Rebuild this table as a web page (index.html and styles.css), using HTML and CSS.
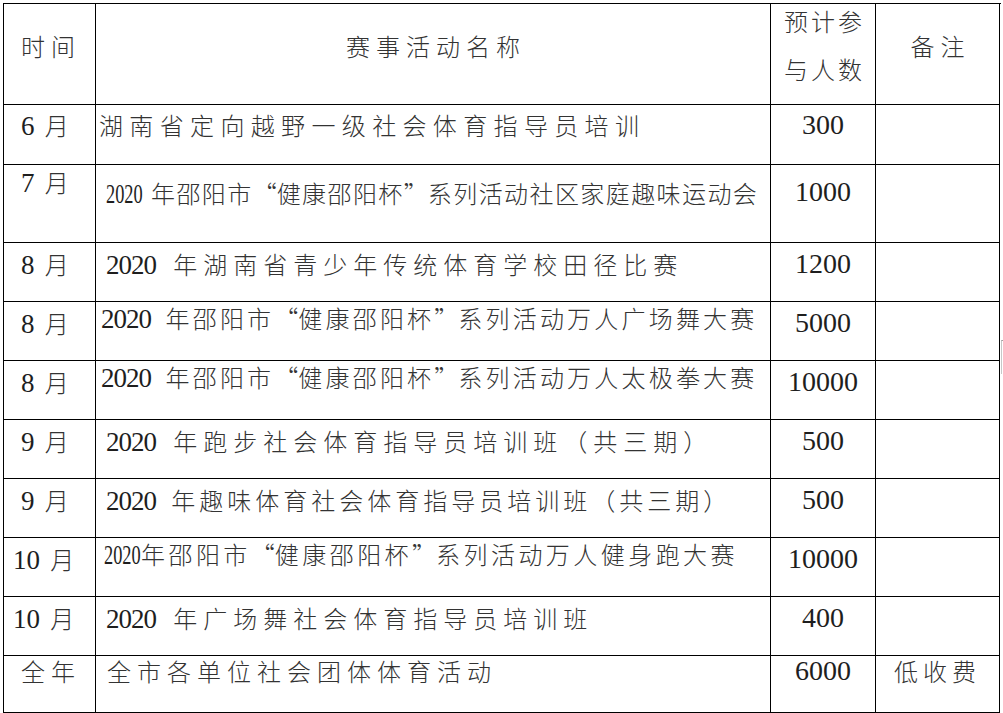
FILE: index.html
```html
<!DOCTYPE html>
<html lang="zh-CN">
<head>
<meta charset="utf-8">
<title>赛事活动</title>
<link rel="stylesheet" href="styles.css">
</head>
<body>
<div class="sheet">
  <div class="c c1 h ls6">时间</div>
  <div class="c c2 h ls6 ctr ind">赛事活动名称</div>
  <div class="c c3 h2"><span class="hl">预计参</span><span class="hl">与人数</span></div>
  <div class="c c4 h ls6 ctr ind">备注</div>

  <div class="c c1 r1"><span class="n">6</span> 月</div>
  <div class="c c2 r1 ls6a pl3">湖南省定向越野一级社会体育指导员培训</div>
  <div class="c c3 r1 n">300</div>
  <div class="c c4 r1"></div>

  <div class="c c1 r2a"><span class="n">7</span> 月</div>
  <div class="c c2 r2b ls1 pl10"><span class="n cond gap">2020</span>年邵阳市<span class="ql">“</span>健康邵阳杯<span class="qr">”</span>系列活动社区家庭趣味运动会</div>
  <div class="c c3 r2c n">1000</div>
  <div class="c c4 r2a"></div>

  <div class="c c1 r3"><span class="n">8</span> 月</div>
  <div class="c c2 r3 ls6 pl10"><span class="n tight">2020</span> 年湖南省青少年传统体育学校田径比赛</div>
  <div class="c c3 r3 n">1200</div>
  <div class="c c4 r3"></div>

  <div class="c c1 r4a"><span class="n">8</span> 月</div>
  <div class="c c2 r4b ls3 pl5"><span class="n tight">2020</span> 年邵阳市<span class="ql">“</span>健康邵阳杯<span class="qr">”</span>系列活动万人广场舞大赛</div>
  <div class="c c3 r4a n">5000</div>
  <div class="c c4 r4a"></div>

  <div class="c c1 r4a"><span class="n">8</span> 月</div>
  <div class="c c2 r4b ls3 pl5"><span class="n tight">2020</span> 年邵阳市<span class="ql">“</span>健康邵阳杯<span class="qr">”</span>系列活动万人太极拳大赛</div>
  <div class="c c3 r4a n">10000</div>
  <div class="c c4 r4a"></div>

  <div class="c c1 r4a"><span class="n">9</span> 月</div>
  <div class="c c2 r4a ls6 pl10"><span class="n tight">2020</span> 年跑步社会体育指导员培训班（共三期）</div>
  <div class="c c3 r4a n">500</div>
  <div class="c c4 r4a"></div>

  <div class="c c1 r4a"><span class="n">9</span> 月</div>
  <div class="c c2 r4a ls4 pl10"><span class="n tight">2020</span> 年趣味体育社会体育指导员培训班（共三期）</div>
  <div class="c c3 r4a n">500</div>
  <div class="c c4 r4a"></div>

  <div class="c c1 r4a pl9"><span class="n">10</span> 月</div>
  <div class="c c2 r4b ls3b pl8"><span class="n cond">2020</span>年邵阳市<span class="ql">“</span>健康邵阳杯<span class="qr">”</span>系列活动万人健身跑大赛</div>
  <div class="c c3 r4a n">10000</div>
  <div class="c c4 r4a"></div>

  <div class="c c1 r4a pl9"><span class="n">10</span> 月</div>
  <div class="c c2 r4a ls6 pl10"><span class="n tight">2020</span> 年广场舞社会体育指导员培训班</div>
  <div class="c c3 r4a n">400</div>
  <div class="c c4 r4a"></div>

  <div class="c c1 r10 ls6">全年</div>
  <div class="c c2 r10 ls6 pl11">全市各单位社会团体体育活动</div>
  <div class="c c3 r10 n">6000</div>
  <div class="c c4 r10 ls5 ctr">低收费</div>
</div>
<div class="mark"></div>
</body>
</html>
```

FILE: styles.css
```css
html, body {
  margin: 0;
  padding: 0;
  background: #fff;
}

body {
  position: relative;
  width: 1003px;
  height: 713px;
  overflow: hidden;
  font-family: "Liberation Serif", "Noto Sans CJK SC", serif;
  color: #333;
}

.sheet {
  margin: 3px 0 0 3px;
  display: grid;
  grid-template-columns: 92px 675px 105px 124px;
  grid-template-rows: 101px 60px 78px 59px 59px 59px 59px 59px 59px 59px 57px;
  width: 997px;
  border-left: 1px solid #000;
  border-top: 1px solid #000;
}

.c {
  border-right: 1px solid #000;
  border-bottom: 1px solid #000;
  font-family: "Noto Sans CJK SC", sans-serif;
  font-weight: 300;
  font-size: 24px;
  line-height: 30px;
  white-space: nowrap;
  color: #333;
}

.c .n, .c.n {
  font-family: "Liberation Serif", serif;
  font-weight: 400;
  color: #1e1e1e;
}

.c.n { font-size: 28px; }
.c .n { font-size: 27px; }

.c1 { padding-left: 17px; }
.c1.pl9 { padding-left: 9px; }
.c1 .n { margin-right: 5px; }
.c3 { text-align: center; }
.ctr { text-align: center; }
.ind { text-indent: 6px; }

.pl3 { padding-left: 3px; }
.pl5 { padding-left: 5px; }
.pl8 { padding-left: 8px; }
.pl10 { padding-left: 10px; }
.pl11 { padding-left: 11px; }

.ls1 { letter-spacing: 1.42px; }
.ls3 { letter-spacing: 3.2px; }
.ls3b { letter-spacing: 3.45px; }
.ls4 { letter-spacing: 4px; }
.ls5 { letter-spacing: 5px; }
.ls6 { letter-spacing: 6px; }
.ls6a { letter-spacing: 6.35px; }

.cond {
  display: inline-block;
  letter-spacing: 0;
  transform: scaleX(0.68);
  transform-origin: 0 50%;
  margin-right: -17px;
}
.cond.gap { margin-right: -9px; }
.tight { letter-spacing: -1px; margin-right: 6px; }

.ql, .qr {
  display: inline-block;
  width: 24px;
  letter-spacing: 0;
}
.ql { text-align: right; }
.qr { text-align: left; }

.h { padding-top: 27px; }

.h2 {
  display: flex;
  flex-direction: column;
  align-items: center;
  gap: 18px;
  padding-top: 2px;
  letter-spacing: 3px;
  text-indent: 3px;
}
.hl { display: block; }

.r1 { padding-top: 5px; }
.r2a { padding-top: 2px; }
.r2b { padding-top: 13px; }
.r2c { padding-top: 12px; }
.r3 { padding-top: 6px; }
.r4a { padding-top: 6px; }
.r4b { padding-top: 1px; }
.r10 { padding-top: 0; }

.mark {
  position: absolute;
  left: 1001px;
  top: 340px;
  width: 2px;
  height: 33px;
  border-left: 1px solid #c8c8c8;
  border-top: 1px solid #a0a0a0;
}
```
